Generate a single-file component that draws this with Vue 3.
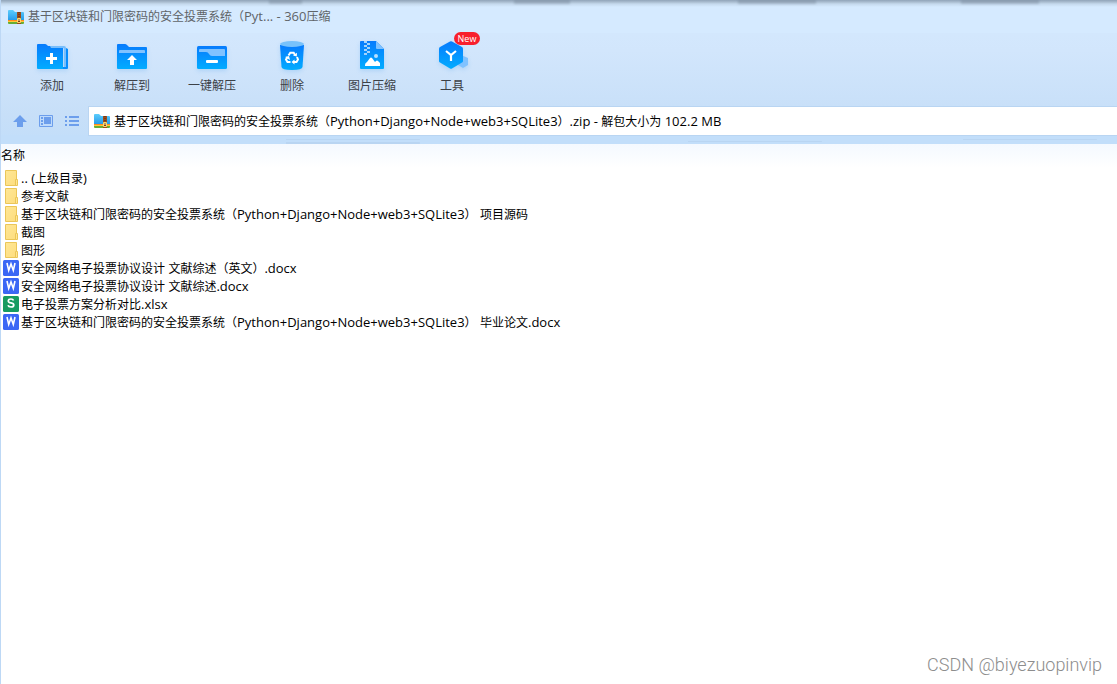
<script setup>
import { h } from 'vue'

const archive = '基于区块链和门限密码的安全投票系统'
const tech = 'Python+Django+Node+web3+SQLite3'

// Latin runs are set one size larger than the Chinese text around them.
const MixedText = (props) =>
  h(
    'span',
    { class: 'mixed' },
    props.text
      .split(/([\x20-\x7e]+)/)
      .filter(Boolean)
      .map((part) => (/^[\x20-\x7e]/.test(part) ? h('span', { class: 'latin' }, part) : part)),
  )
MixedText.props = ['text']

const tools = [
  { id: 'add', label: '添加' },
  { id: 'extract', label: '解压到' },
  { id: 'quick', label: '一键解压' },
  { id: 'delete', label: '删除' },
  { id: 'image', label: '图片压缩' },
  { id: 'tools', label: '工具', badge: 'New' },
]

const files = [
  { type: 'folder', name: '.. (上级目录)' },
  { type: 'folder', name: '参考文献' },
  { type: 'folder', name: `${archive}（${tech}） 项目源码` },
  { type: 'folder', name: '截图' },
  { type: 'folder', name: '图形' },
  { type: 'word', name: '安全网络电子投票协议设计 文献综述（英文）.docx' },
  { type: 'word', name: '安全网络电子投票协议设计 文献综述.docx' },
  { type: 'sheet', name: '电子投票方案分析对比.xlsx' },
  { type: 'word', name: `${archive}（${tech}） 毕业论文.docx` },
]
</script>

<template>
  <div class="window">
    <svg class="defs" width="0" height="0" aria-hidden="true">
      <defs>
        <linearGradient id="blue" x1="0" y1="0" x2="0" y2="1">
          <stop offset="0" stop-color="#077bfd" />
          <stop offset="1" stop-color="#02acff" />
        </linearGradient>
        <linearGradient id="sky" x1="0" y1="0" x2="0" y2="1">
          <stop offset="0" stop-color="#5ccdfc" />
          <stop offset="1" stop-color="#2196e8" />
        </linearGradient>
        <linearGradient id="paper" x1="0" y1="0" x2="1" y2="1">
          <stop offset="0" stop-color="#ffe795" />
          <stop offset="1" stop-color="#fddd7e" />
        </linearGradient>
        <symbol id="zip" viewBox="0 0 16 14">
          <path d="M0 1Q0 0 1 0H5L7 2H15Q16 2 16 3V11H0Z" fill="url(#sky)" />
          <path d="M0 10H16V12H0Z" fill="#ff8a1c" />
          <path d="M0 11H16V12H0Z" fill="#ffc83a" />
          <path d="M0 12H16V13Q16 14 15 14H1Q0 14 0 13Z" fill="#67ad35" />
          <path d="M9 2H13V14H9Z" fill="#9b4b1b" />
          <path d="M11 2V8" stroke="#4e2b1d" stroke-width="1" stroke-dasharray="1 1" />
          <path d="M9.5 8.500H12.500V12.500H9.500Z" fill="#7b3d16" stroke="#ffdc69" />
          <path d="M11 9V11" stroke="#fff4b4" />
        </symbol>
      </defs>
    </svg>

    <header class="chrome">
      <div class="titlebar">
        <i class="shade s1"></i><i class="shade s2"></i><i class="shade s3"></i><i class="shade s4"></i>
        <svg class="zip" aria-hidden="true"><use href="#zip" /></svg>
        <h1><MixedText :text="`${archive}（Pyt... - 360压缩`" /></h1>
      </div>

      <nav class="toolbar" aria-label="工具栏">
        <button v-for="tool in tools" :key="tool.id" type="button" class="tool">
          <svg class="tool-icon" viewBox="0 0 32 32" aria-hidden="true">
            <template v-if="tool.id === 'add'">
              <path d="M1 5Q1 4 2 4H9Q10 4 11 5L12 6H27V29H2Q1 29 1 28Z" fill="url(#blue)" />
              <path d="M14 6H28Q30 6 30 8V27H28V9Q28 8 27 8H15Z" fill="#78befc" />
              <path d="M30 8L32 9V28Q32 29 31 29H27V27H30Z" fill="#078dfd" />
              <path d="M15.500 13V24M10 18.500H21" stroke="#fff" stroke-width="3" />
            </template>
            <template v-else-if="tool.id === 'extract'">
              <path d="M1 5Q1 4 2 4H9Q10 4 11 5L13 7H30Q31 7 31 8V28Q31 29 30 29H2Q1 29 1 28Z" fill="url(#blue)" />
              <path d="M3 13V11Q3 10 4 10H28Q29 10 29 11V13Z" fill="#80c2ff" />
              <path d="M16 15L21 20H18V25H14V20H11Z" fill="#fff" />
            </template>
            <template v-else-if="tool.id === 'quick'">
              <rect x="1" y="6" width="30" height="23" rx="1.500" fill="url(#blue)" />
              <path d="M3 12V10Q3 9 4 9H28Q29 9 29 10V16H16Q14 16 13 14Q12 12 10 12Z" fill="#80c2ff" />
              <rect x="10" y="20" width="12" height="3" rx="1" fill="#fff" />
            </template>
            <template v-else-if="tool.id === 'delete'">
              <path d="M4 5H28L26.500 27Q26.200 30 16 30Q5.800 30 5.500 27Z" fill="url(#blue)" />
              <ellipse cx="16" cy="4" rx="12" ry="3" fill="#78c2fb" />
              <path d="M12.500 15.500L14.300 12.800H17.700L19 15M21 17L22 19.500L20.500 22H17.500M14.500 22H11.500L10 19.500L11.500 17" fill="none" stroke="#fff" stroke-width="2" />
              <path d="M17 15.500L20.800 16.500L21 12.800ZM18.500 19.500V24.500L15.500 22ZM9 17L13 16L14 20Z" fill="#fff" />
            </template>
            <template v-else-if="tool.id === 'image'">
              <path d="M4 2Q4 1 5 1H20L28 9V28Q28 29 27 29H5Q4 29 4 28Z" fill="url(#blue)" />
              <path d="M20 1L28 9H21Q20 9 20 8Z" fill="#80c2ff" />
              <path d="M8 1H11V3H14V5H11V3H8ZM8 5H11V7H14V9H11V7H8ZM8 9H11V11H14V13H11V11H8ZM8 13H11V15H8Z" fill="#a4d3fb" />
              <circle cx="20" cy="16" r="2" fill="#b8e0ff" />
              <path d="M9 25Q9 23 11 22L14 18Q15 17 16 18L19 22L20 21Q21 20 22 21L24 23V26H9Z" fill="#fff" />
            </template>
            <template v-else>
              <path d="M25 15L32 18V25L27 28L22 25V18Z" fill="#80c2ff" />
              <path d="M14 1.500Q15 1 16 1.500L26 7Q27 7.500 27 9V21Q27 22 26 22.500L16 28.500Q15 29 14 28.500L4 22.500Q3 22 3 21V9Q3 7.500 4 7Z" fill="url(#blue)" />
              <path d="M10 11L15 15L20 11M15 15V21" fill="none" stroke="#fff" stroke-width="2.200" />
            </template>
          </svg>
          <span>{{ tool.label }}</span>
          <em v-if="tool.badge" class="badge">{{ tool.badge }}</em>
        </button>
      </nav>

      <div class="addressbar">
        <div class="views">
          <button type="button" aria-label="上级目录">
            <svg viewBox="0 0 16 16"><path d="M8 2L15 9H11V14H5V9H1Z" fill="#6c9eec" /></svg>
          </button>
          <button type="button" aria-label="缩略图">
            <svg viewBox="0 0 16 16">
              <path d="M1.500 2.500H14.500V13.500H1.500Z" fill="#bedafb" stroke="#6c9eec" />
              <path d="M3 4H5V6H3ZM3 7H5V9H3ZM3 10H5V12H3ZM6 4H13V11H6Z" fill="#6c9eec" />
            </svg>
          </button>
          <button type="button" aria-label="列表">
            <svg viewBox="0 0 16 16"><path d="M1 3H3V5H1ZM1 7H3V9H1ZM1 11H3V13H1ZM5 3H15V5H5ZM5 7H15V9H5ZM5 11H15V13H5Z" fill="#6c9eec" /></svg>
          </button>
        </div>
        <div class="path">
          <svg class="zip" aria-hidden="true"><use href="#zip" /></svg>
          <MixedText :text="`${archive}（${tech}）.zip - 解包大小为 102.2 MB`" />
        </div>
      </div>
      <div class="band"></div>
    </header>

    <main>
      <table>
        <thead>
          <tr><th scope="col">名称</th></tr>
        </thead>
        <tbody>
          <tr v-for="file in files" :key="file.name">
            <td>
              <div class="file">
                <svg v-if="file.type === 'folder'" viewBox="0 0 16 16" aria-hidden="true">
                  <path d="M2.500 .5H13.500V15.500H2.500Z" fill="url(#paper)" stroke="#ebc658" />
                  <path d="M12.500 15.500V9.500H14.500V15.500Z" fill="#ffe691" stroke="#ebc658" />
                </svg>
                <svg v-else-if="file.type === 'word'" viewBox="0 0 16 16" aria-hidden="true">
                  <rect width="16" height="16" rx="1.500" fill="#3b67f5" />
                  <path d="M4 3L5.700 10.500L8 4L10.300 10.500L12 3" fill="none" stroke="#fff" stroke-width="1.600" />
                </svg>
                <svg v-else viewBox="0 0 16 16" aria-hidden="true">
                  <rect width="16" height="16" rx="1.500" fill="#179b61" />
                  <path d="M10.500 4.500Q10 3 8 3Q5.300 3 5.300 4.900Q5.300 6.400 8 6.800Q10.800 7.300 10.800 9Q10.800 11 8 11Q5.500 11 5 9.300" fill="none" stroke="#fff" stroke-width="1.700" />
                </svg>
                <MixedText :text="file.name" />
              </div>
            </td>
          </tr>
        </tbody>
      </table>
    </main>
    <p class="watermark">CSDN @biyezuopinvip</p>
  </div>
</template>

<style>
body {
  margin: 0;
}
</style>

<style scoped>
.window {
  box-sizing: border-box;
  min-height: 100vh;
  display: flex;
  flex-direction: column;
  position: relative;
  border-left: 1px solid #bdd8f5;
  background: #fff;
  color: #000;
  font: 12px/18px "Open Sans", "Noto Sans CJK SC", sans-serif;
}
.window :deep(.latin) {
  font-size: 13px;
  line-height: 16px;
  white-space: pre;
}
.defs {
  position: absolute;
}
.chrome {
  background: linear-gradient(#d5eaff 0, #d2e6fc 35%, #c7dff8 80%, #c2defa 100%);
}
.band {
  height: 9px;
  background:
    linear-gradient(#b9d5f2, #b9d5f2) 29% 4px / 12% 1px no-repeat,
    linear-gradient(#b9d5f2, #b9d5f2) 29% 7px / 12% 2px no-repeat,
    linear-gradient(#b9d5f2, #b9d5f2) 70% 6px / 12% 1px no-repeat,
    linear-gradient(#b9d5f2, #b9d5f2) 98% 4px / 12% 1px no-repeat,
    #c2defa;
}
.titlebar {
  position: relative;
  height: 33px;
  display: flex;
  align-items: center;
  gap: 4px;
  padding-left: 7px;
  background: linear-gradient(#90a4b9 0, #a9bccf 2px, #c5d9ed 4px, #d5eaff 7px, #d5eaff 100%);
}
.shade {
  position: absolute;
  top: 0;
  height: 4px;
  background: linear-gradient(#728497, #b5c8db);
  filter: blur(1px);
}
.s1 {
  left: 24%;
  width: 3%;
}
.s2 {
  left: 46%;
  width: 5%;
}
.s3 {
  left: 66%;
  width: 7%;
}
.s4 {
  left: 86%;
  width: 7%;
}
.zip {
  width: 16px;
  height: 14px;
  flex: none;
}
h1 {
  margin: 0;
  font-size: 12px;
  font-weight: 400;
  color: #606468;
}
button {
  border: 0;
  padding: 0;
  background: none;
  font: inherit;
  color: inherit;
}
.toolbar {
  display: flex;
  padding-left: 11px;
  height: 74px;
}
.tool {
  position: relative;
  width: 80px;
  display: flex;
  flex-direction: column;
  align-items: center;
  padding-top: 7px;
  gap: 5px;
  color: #3c4147;
}
.tool-icon {
  width: 32px;
  height: 32px;
  filter: drop-shadow(0 2px 2px #1686e82b);
}
.badge {
  position: absolute;
  top: -1px;
  left: 42px;
  width: 26px;
  height: 13px;
  border-radius: 7px;
  background: #f81f2c;
  color: #fff;
  font-size: 9px;
  line-height: 13px;
  font-style: normal;
  text-align: center;
}
.addressbar {
  display: flex;
  align-items: center;
}
.views {
  width: 88px;
  box-sizing: border-box;
  display: flex;
  gap: 10px;
  padding-left: 11px;
}
.views button,
.views svg {
  display: block;
  width: 16px;
  height: 16px;
}
.path {
  flex: 1;
  height: 28px;
  display: flex;
  align-items: center;
  gap: 4px;
  padding-left: 5px;
  background: #fff;
  box-shadow: 0 0 0 1px #b9d5f2;
}
.path .mixed,
.file .mixed {
  padding-top: 2px;
}
main {
  flex: 1;
  background: linear-gradient(#f4f9ff 0, #fff 24px);
}
table {
  width: 100%;
  border-collapse: collapse;
}
th {
  height: 25px;
  box-sizing: border-box;
  padding: 0 0 2px;
  text-align: left;
  font-weight: 400;
}
td {
  padding: 0;
}
.file {
  display: flex;
  align-items: center;
  gap: 2px;
  height: 18px;
  padding-left: 2px;
  white-space: nowrap;
}
.file svg {
  width: 16px;
  height: 16px;
  flex: none;
}
.watermark {
  position: absolute;
  right: 15px;
  bottom: 9px;
  margin: 0;
  font: 300 18px/20px Roboto, "Liberation Sans", sans-serif;
  color: #8d8d8d;
}
</style>
